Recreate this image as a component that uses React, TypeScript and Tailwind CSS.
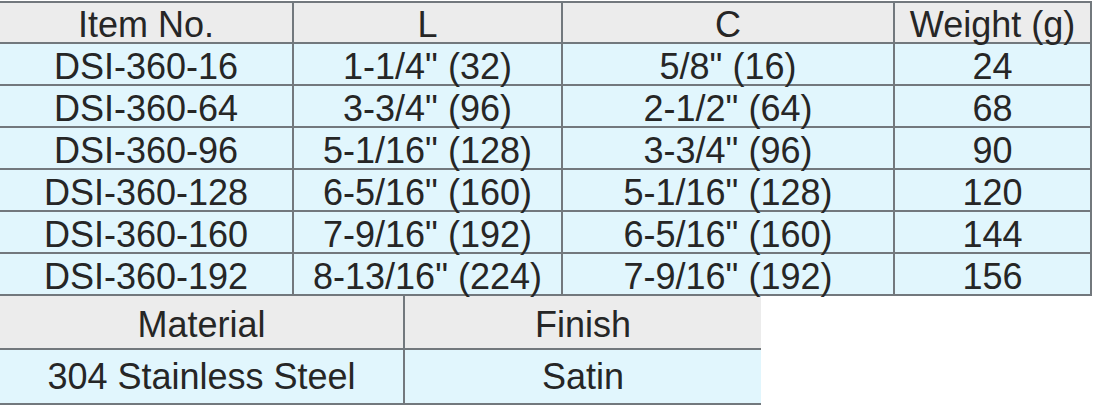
const ROWS = [
  ['DSI-360-16', '1-1/4" (32)', '5/8" (16)', '24'],
  ['DSI-360-64', '3-3/4" (96)', '2-1/2" (64)', '68'],
  ['DSI-360-96', '5-1/16" (128)', '3-3/4" (96)', '90'],
  ['DSI-360-128', '6-5/16" (160)', '5-1/16" (128)', '120'],
  ['DSI-360-160', '7-9/16" (192)', '6-5/16" (160)', '144'],
  ['DSI-360-192', '8-13/16" (224)', '7-9/16" (192)', '156'],
]

const HEAD = ['Item No.', 'L', 'C', 'Weight (g)']

const grid = 'grid grid-cols-[292px_269px_332px_1fr] border-b-2 border-[#72787d]'

function Cell({ text, first, className }: { text: string; first?: boolean; className: string }) {
  return (
    <div
      className={`text-center leading-[36px] whitespace-nowrap ${first ? '' : 'border-l-2 border-[#72787d]'} ${className}`}
    >
      {text}
    </div>
  )
}

export default function App() {
  return (
    <div
      className="w-[1093px] h-[406px] bg-white pt-px text-[36px] text-[#262626]"
      style={{ fontFamily: '"Liberation Sans", Arial, sans-serif' }}
    >
      <div className="w-[1092px] border-t-2 border-r-2 border-[#72787d]">
        <div className={`${grid} bg-[#ececec]`}>
          {HEAD.map((h, i) => (
            <Cell key={h} text={h} first={i === 0} className="h-[39px] pt-[4px]" />
          ))}
        </div>
        {ROWS.map((row) => (
          <div key={row[0]} className={`${grid} bg-[#e1f6fd]`}>
            {row.map((c, i) => (
              <Cell key={i} text={c} first={i === 0} className="h-[40px] pt-[5px]" />
            ))}
          </div>
        ))}
      </div>
      <div className="w-[761px]">
        <div className="grid grid-cols-[403px_1fr] bg-[#ececec] border-b-2 border-[#72787d]">
          <Cell text="Material" first className="h-[52px] pt-[11px]" />
          <Cell text="Finish" className="h-[52px] pt-[11px]" />
        </div>
        <div className="grid grid-cols-[403px_1fr] bg-[#e1f6fd] border-b-2 border-[#72787d]">
          <Cell text="304 Stainless Steel" first className="h-[53px] pt-[9px]" />
          <Cell text="Satin" className="h-[53px] pt-[9px]" />
        </div>
      </div>
    </div>
  )
}
